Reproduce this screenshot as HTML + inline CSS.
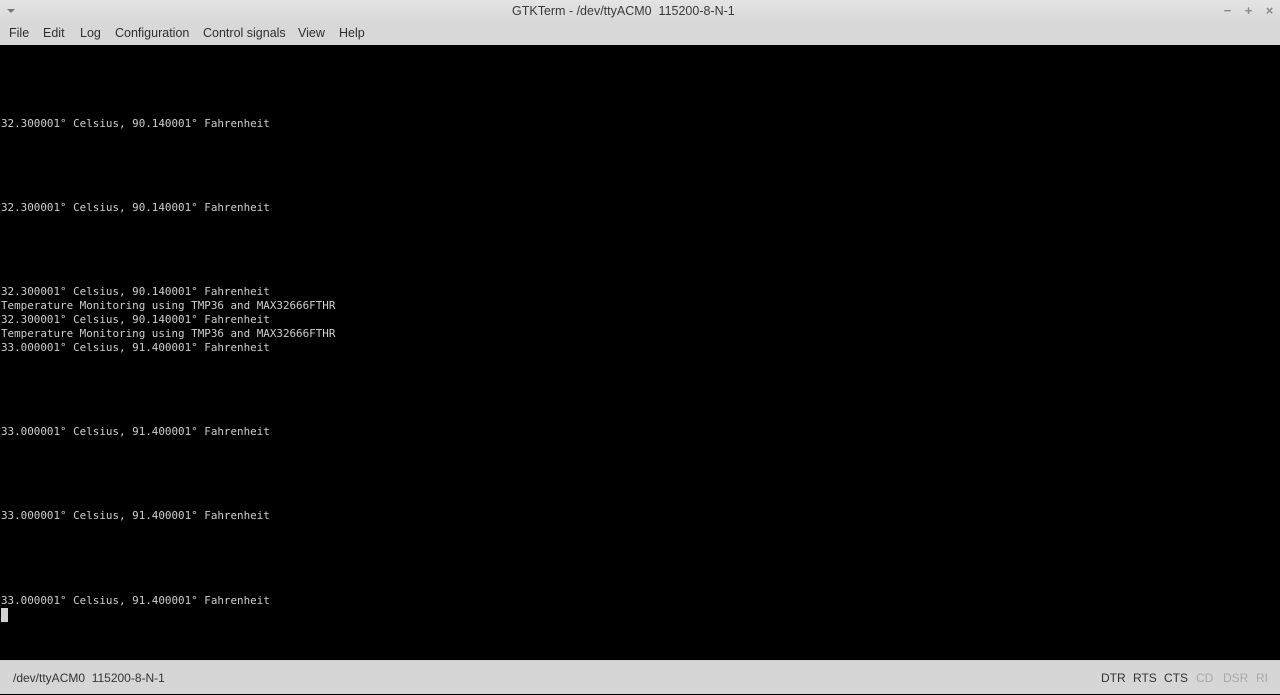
<!DOCTYPE html>
<html><head><meta charset="utf-8"><style>
*{margin:0;padding:0;box-sizing:border-box}
body{width:1280px;height:694px;overflow:hidden;background:#000;font-family:"Liberation Sans",sans-serif;position:relative}
#title{position:absolute;left:0;top:0;width:1280px;height:22px;background:linear-gradient(#e4e4e4,#d8d8d8);font-size:12.5px;color:#3a3a3a;line-height:23px}
#tt{position:absolute;left:512px;top:0}
#arrow{position:absolute;left:7px;top:9px;width:0;height:0;border-left:4px solid transparent;border-right:4px solid transparent;border-top:4px solid #777}
#ctl{position:absolute;right:0px;top:0;font-size:13px;color:#8a8a8a;line-height:22px}
#ctl span{display:inline-block;width:21px;text-align:center;font-weight:bold}
#menu{position:absolute;left:0;top:22px;width:1280px;height:23px;background:#d8d8d8;font-size:12.5px;color:#2e2e2e;line-height:22px}
#menu span{position:absolute;top:0}
#term{position:absolute;left:0;top:45px;width:1280px;height:615px;background:#000}
.l{position:absolute;left:1px;font-family:"DejaVu Sans Mono","Liberation Mono",monospace;font-size:10.9px;color:#cfcfcf;white-space:pre;line-height:14px}
#cur{position:absolute;left:1px;top:563px;width:7px;height:14px;background:#d0d0d0}
#status{position:absolute;left:0;top:660px;width:1280px;height:34px;background:#d6d6d6;border-top:1px solid #c8c8c8;font-size:12px;color:#333;line-height:34px}
#status .s{position:absolute;top:0}
.g{color:#a8a8a8}
</style></head><body>
<div id="title"><div id="arrow"></div><span id="tt">GTKTerm - /dev/ttyACM0&nbsp; 115200-8-N-1</span><div id="ctl"><span>−</span><span>+</span><span>×</span></div></div>
<div id="menu"><span style="left:9px">File</span><span style="left:43px">Edit</span><span style="left:80px">Log</span><span style="left:115px">Configuration</span><span style="left:203px">Control signals</span><span style="left:298px">View</span><span style="left:339px">Help</span></div>
<div id="term">
<div class="l" style="top:72px">32.300001° Celsius, 90.140001° Fahrenheit</div>
<div class="l" style="top:156px">32.300001° Celsius, 90.140001° Fahrenheit</div>
<div class="l" style="top:240px">32.300001° Celsius, 90.140001° Fahrenheit
Temperature Monitoring using TMP36 and MAX32666FTHR
32.300001° Celsius, 90.140001° Fahrenheit
Temperature Monitoring using TMP36 and MAX32666FTHR
33.000001° Celsius, 91.400001° Fahrenheit</div>
<div class="l" style="top:380px">33.000001° Celsius, 91.400001° Fahrenheit</div>
<div class="l" style="top:464px">33.000001° Celsius, 91.400001° Fahrenheit</div>
<div class="l" style="top:549px">33.000001° Celsius, 91.400001° Fahrenheit</div>
<div id="cur"></div>
</div>
<div id="status"><span class="s" style="left:13px">/dev/ttyACM0&nbsp; 115200-8-N-1</span>
<span class="s" style="left:1101px">DTR</span><span class="s" style="left:1133px">RTS</span><span class="s" style="left:1164px">CTS</span><span class="s g" style="left:1196px">CD</span><span class="s g" style="left:1223px">DSR</span><span class="s g" style="left:1256px">RI</span></div>
</body></html>
